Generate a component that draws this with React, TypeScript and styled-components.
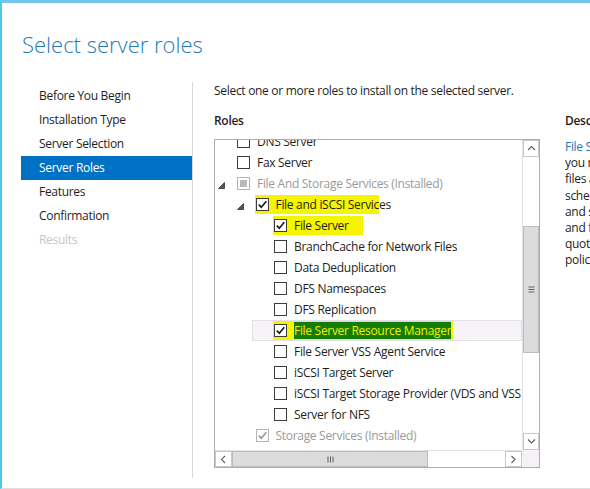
import React from "react";
import styled, { createGlobalStyle } from "styled-components";

const GlobalStyle = createGlobalStyle`
  html, body {
    margin: 0;
    padding: 0;
    background: #fff;
  }
  body {
    font-family: "Open Sans", "Noto Sans", sans-serif;
    font-size: 12px;
    letter-spacing: -0.3px;
    color: #1e1e1e;
  }
`;

const Window = styled.div`
  width: 590px;
  height: 489px;
  box-sizing: border-box;
  border-top: 3px solid #6fc6ea;
  border-left: 2px solid #4ec8f1;
  border-bottom: 1px solid #dedede;
  overflow: hidden;
  display: flex;
  flex-direction: column;
`;

const Header = styled.div`
  height: 79px;
  flex-shrink: 0;
  padding-left: 20px;
  box-sizing: border-box;
  padding-top: 26px;
`;

const Title = styled.h1`
  margin: 0;
  font-size: 22px;
  font-weight: 300;
  letter-spacing: 0;
  color: #1f7ab7;
  line-height: 30px;
`;

const Body = styled.div`
  display: flex;
  flex: 1;
  min-height: 0;
`;

const Nav = styled.ul`
  list-style: none;
  margin: 0 0 10px 19px;
  padding: 2px 0 0;
  width: 171px;
  border-right: 1px solid #d8d8d8;
  flex-shrink: 0;
`;

const NavItem = styled.li<{ $active?: boolean; $disabled?: boolean }>`
  height: 24px;
  line-height: 24px;
  padding-left: 18px;
  background: ${(p) => (p.$active ? "#0072c6" : "transparent")};
  color: ${(p) => (p.$active ? "#fff" : p.$disabled ? "#c6c6c6" : "#1e1e1e")};
`;

const Content = styled.div`
  padding-left: 21px;
  flex: 1;
  min-width: 0;
`;

const Intro = styled.p`
  margin: 0;
  padding-top: 1px;
  line-height: 16px;
`;

const Columns = styled.div`
  display: flex;
  gap: 25px;
  margin-top: 14px;
`;

const RolesColumn = styled.div`
  width: 326px;
  flex-shrink: 0;
`;

const Heading = styled.div`
  font-weight: 600;
  line-height: 16px;
  height: 16px;
  margin-bottom: 10px;
`;

const ListBox = styled.div`
  width: 326px;
  height: 329px;
  box-sizing: border-box;
  border: 1px solid #abadb3;
  display: grid;
  grid-template-columns: 1fr 17px;
  grid-template-rows: 1fr 17px;
`;

const Viewport = styled.div`
  overflow: hidden;
`;

const Rows = styled.div`
  margin-top: -9px;
`;

const Row = styled.div<{ $level: number }>`
  height: 21px;
  display: flex;
  padding-left: ${(p) => p.$level * 18.5}px;
`;

const Item = styled.div<{ $selected?: boolean }>`
  flex: 1;
  display: flex;
  align-items: center;
  padding-left: 2px;
  border: 1px solid ${(p) => (p.$selected ? "#e4dfe8" : "transparent")};
  background: ${(p) => (p.$selected ? "#f7f4f8" : "transparent")};
  white-space: nowrap;
  overflow: hidden;
`;

const Expander = styled.span`
  width: 19px;
  flex-shrink: 0;
  display: flex;
  align-items: center;
  padding-top: 3px;
`;

const Mark = styled.span<{ $pad?: number }>`
  display: flex;
  align-items: center;
  background: #f5f500;
  height: 19px;
  margin-left: -1px;
  padding-left: 1px;
  padding-right: ${(p) => p.$pad ?? 0}px;
`;

const Box = styled.span<{ $dim?: boolean }>`
  width: 13px;
  height: 13px;
  box-sizing: border-box;
  border: 1px solid ${(p) => (p.$dim ? "#b4b4b4" : "#3c3c3c")};
  background: #fff;
  display: inline-flex;
  align-items: center;
  justify-content: center;
  flex-shrink: 0;
`;

const Partial = styled.span`
  width: 7px;
  height: 7px;
  background: #b9b9b9;
`;

const Label = styled.span<{ $dim?: boolean; $hot?: boolean }>`
  margin-left: 7px;
  color: ${(p) => (p.$hot ? "#f0f000" : p.$dim ? "#9a9a9a" : "#1e1e1e")};
  background: ${(p) => (p.$hot ? "#137d08" : "transparent")};
  line-height: 17px;
`;

const Plain = styled.span`
  color: #1e1e1e;
`;

const VScroll = styled.div`
  display: flex;
  flex-direction: column;
  background: #fff;
  border-left: 1px solid #e2e2e2;
`;

const HScroll = styled.div`
  display: flex;
  background: #fff;
  border-top: 1px solid #e2e2e2;
`;

const ArrowBtn = styled.div<{ $h?: boolean }>`
  width: ${(p) => (p.$h ? "17px" : "auto")};
  height: ${(p) => (p.$h ? "auto" : "17px")};
  box-sizing: border-box;
  border: 1px solid #c8c8c8;
  display: flex;
  align-items: center;
  justify-content: center;
  flex-shrink: 0;
`;

const Track = styled.div<{ $v?: boolean }>`
  flex: 1;
  display: flex;
  flex-direction: ${(p) => (p.$v ? "column" : "row")};
`;

const Thumb = styled.div`
  background: #dcdcdc;
  border: 1px solid #bcbcbc;
  box-sizing: border-box;
  display: flex;
  align-items: center;
  justify-content: center;
`;

const Corner = styled.div`
  background: #f5f1f6;
`;

const DescColumn = styled.div`
  flex: 1;
  min-width: 0;
  overflow: hidden;
`;

const DescLine = styled.div`
  white-space: nowrap;
  line-height: 16.2px;
`;

const Link = styled.span`
  color: #1f7ab7;
`;

const Check = ({ color = "#1e1e1e" }: { color?: string }) => (
  <svg width="11" height="11" viewBox="0 0 11 11">
    <path d="M1.8 5.6 L4.3 8.2 L9.3 2.2" stroke={color} strokeWidth="1.7" fill="none" />
  </svg>
);

const Triangle = () => (
  <svg width="7" height="7" viewBox="0 0 7 7">
    <polygon points="6.5,0.5 6.5,6.5 0.5,6.5" fill="#555" stroke="#333" strokeWidth="0.8" />
  </svg>
);

const Chevron = ({ dir }: { dir: "up" | "down" | "left" | "right" }) => {
  const d = {
    up: "M1 5 L4.5 1.5 L8 5",
    down: "M1 1.5 L4.5 5 L8 1.5",
    left: "M5 1 L1.5 4.5 L5 8",
    right: "M1.5 1 L5 4.5 L1.5 8",
  }[dir];
  const horiz = dir === "left" || dir === "right";
  return (
    <svg width={horiz ? 7 : 9} height={horiz ? 9 : 7} viewBox={horiz ? "0 0 7 9" : "0 0 9 7"}>
      <path d={d} stroke="#606060" strokeWidth="1.1" fill="none" />
    </svg>
  );
};

const Grip = ({ h }: { h?: boolean }) => (
  <svg width={7} height={7} viewBox="0 0 7 7">
    {h ? (
      <path d="M1 0.5 V6.5 M3.5 0.5 V6.5 M6 0.5 V6.5" stroke="#606060" strokeWidth="1" />
    ) : (
      <path d="M0.5 1 H6.5 M0.5 3.5 H6.5 M0.5 6 H6.5" stroke="#606060" strokeWidth="1" />
    )}
  </svg>
);

const nav = [
  "Before You Begin",
  "Installation Type",
  "Server Selection",
  "Server Roles",
  "Features",
  "Confirmation",
  "Results",
];

const desc = [
  "you manage and understand the",
  "files and folders on a server.",
  "schedule file management tasks",
  "and storage reports, classify files",
  "and folders, configure folder",
  "quotas, and define file screening",
  "policies.",
];

const App = () => (
  <>
    <GlobalStyle />
    <Window>
      <Header>
        <Title>Select server roles</Title>
      </Header>
      <Body>
        <Nav>
          {nav.map((n) => (
            <NavItem key={n} $active={n === "Server Roles"} $disabled={n === "Results"}>
              {n}
            </NavItem>
          ))}
        </Nav>
        <Content>
          <Intro>Select one or more roles to install on the selected server.</Intro>
          <Columns>
            <RolesColumn>
              <Heading>Roles</Heading>
              <ListBox>
                <Viewport>
                  <Rows>
                    <Row $level={0}>
                      <Item>
                        <Expander />
                        <Box />
                        <Label>DNS Server</Label>
                      </Item>
                    </Row>
                    <Row $level={0}>
                      <Item>
                        <Expander />
                        <Box />
                        <Label>Fax Server</Label>
                      </Item>
                    </Row>
                    <Row $level={0}>
                      <Item>
                        <Expander>
                          <Triangle />
                        </Expander>
                        <Box $dim>
                          <Partial />
                        </Box>
                        <Label $dim>File And Storage Services (Installed)</Label>
                      </Item>
                    </Row>
                    <Row $level={1}>
                      <Item>
                        <Expander>
                          <Triangle />
                        </Expander>
                        <Mark>
                          <Box>
                            <Check />
                          </Box>
                          <Label>File and iSCSI Servic</Label>
                        </Mark>
                        <Plain>es</Plain>
                      </Item>
                    </Row>
                    <Row $level={2}>
                      <Item>
                        <Expander />
                        <Mark $pad={14}>
                          <Box>
                            <Check />
                          </Box>
                          <Label>File Server</Label>
                        </Mark>
                      </Item>
                    </Row>
                    {["BranchCache for Network Files", "Data Deduplication", "DFS Namespaces", "DFS Replication"].map(
                      (t) => (
                        <Row $level={2} key={t}>
                          <Item>
                            <Expander />
                            <Box />
                            <Label>{t}</Label>
                          </Item>
                        </Row>
                      )
                    )}
                    <Row $level={2}>
                      <Item $selected>
                        <Expander />
                        <Mark $pad={2}>
                          <Box>
                            <Check />
                          </Box>
                          <Label $hot>File Server Resource Manager</Label>
                        </Mark>
                      </Item>
                    </Row>
                    {[
                      "File Server VSS Agent Service",
                      "iSCSI Target Server",
                      "iSCSI Target Storage Provider (VDS and VSS hardware providers)",
                      "Server for NFS",
                    ].map((t) => (
                      <Row $level={2} key={t}>
                        <Item>
                          <Expander />
                          <Box />
                          <Label>{t}</Label>
                        </Item>
                      </Row>
                    ))}
                    <Row $level={1}>
                      <Item>
                        <Expander />
                        <Box $dim>
                          <Check color="#9a9a9a" />
                        </Box>
                        <Label $dim>Storage Services (Installed)</Label>
                      </Item>
                    </Row>
                  </Rows>
                </Viewport>
                <VScroll>
                  <ArrowBtn>
                    <Chevron dir="up" />
                  </ArrowBtn>
                  <Track $v>
                    <div style={{ height: 69 }} />
                    <Thumb style={{ height: 127 }}>
                      <Grip />
                    </Thumb>
                  </Track>
                  <ArrowBtn>
                    <Chevron dir="down" />
                  </ArrowBtn>
                </VScroll>
                <HScroll>
                  <ArrowBtn $h>
                    <Chevron dir="left" />
                  </ArrowBtn>
                  <Track>
                    <Thumb style={{ width: 196 }}>
                      <Grip h />
                    </Thumb>
                  </Track>
                  <ArrowBtn $h>
                    <Chevron dir="right" />
                  </ArrowBtn>
                </HScroll>
                <Corner />
              </ListBox>
            </RolesColumn>
            <DescColumn>
              <Heading>Description</Heading>
              <DescLine>
                <Link>File Server Resource Manager</Link> helps
              </DescLine>
              {desc.map((l) => (
                <DescLine key={l}>{l}</DescLine>
              ))}
            </DescColumn>
          </Columns>
        </Content>
      </Body>
    </Window>
  </>
);

export default App;
